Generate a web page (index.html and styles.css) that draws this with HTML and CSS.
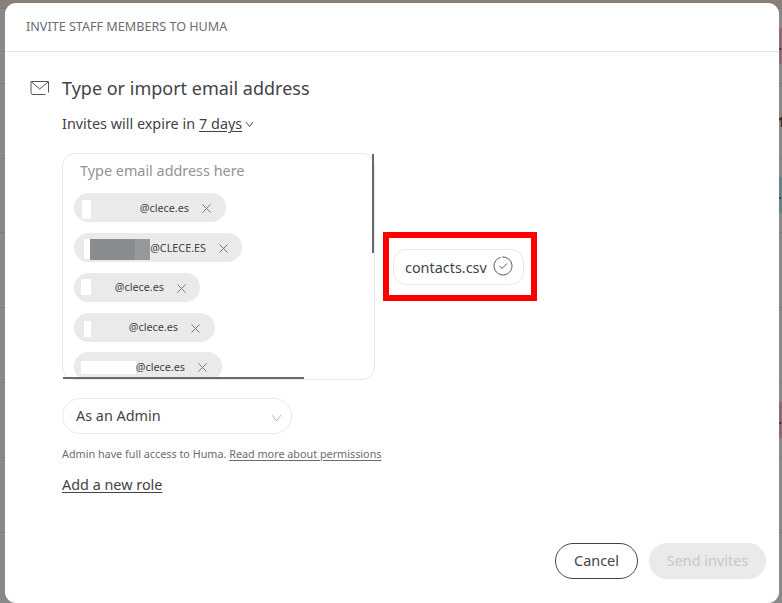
FILE: index.html
```html
<!DOCTYPE html>
<html lang="en">
<head>
<meta charset="utf-8">
<title>Invite staff members</title>
<link rel="stylesheet" href="styles.css">
</head>
<body>
<div class="backdrop" aria-hidden="true">
  <div class="topbar"></div>
  <div class="row"><span class="tag pink">.</span></div>
  <div class="row"><b class="count">1</b></div>
  <div class="row"><span class="tag teal">.</span></div>
  <div class="row"></div>
  <div class="row"></div>
  <div class="row"><span class="tag pink">.</span></div>
  <div class="row"></div>
  <div class="row"></div>
</div>
<main class="modal">
  <header class="modal-header">INVITE STAFF MEMBERS TO HUMA</header>
  <section class="content">
    <svg class="mail" width="20" height="16" viewBox="0 0 20 16"><path d="M15.5 14.5H3Q1 14.5 1 12.5V1.5H18.5V12.5M1.5 2L9.7 9L18 2"/></svg>
    <div class="form">
      <h1>Type or import email address</h1>
      <p class="expiry"><span>Invites will expire in</span><u>7 days</u><svg width="9" height="7" viewBox="0 0 9 7"><path d="M1 1L4.5 5.5L8 1"/></svg></p>
      <div class="import">
        <div class="emails">
          <div class="list">
            <div class="placeholder">Type email address here</div>
            <div class="chip c1"><i></i><span>@clece.es</span><svg viewBox="0 0 9 9"><path d="M.5.5L8.5 8.5M8.5.5L.5 8.5"/></svg></div>
            <div class="chip c2"><i></i><b></b><span>@CLECE.ES</span><svg viewBox="0 0 9 9"><path d="M.5.5L8.5 8.5M8.5.5L.5 8.5"/></svg></div>
            <div class="chip c3"><i></i><span>@clece.es</span><svg viewBox="0 0 9 9"><path d="M.5.5L8.5 8.5M8.5.5L.5 8.5"/></svg></div>
            <div class="chip c4"><i></i><span>@clece.es</span><svg viewBox="0 0 9 9"><path d="M.5.5L8.5 8.5M8.5.5L.5 8.5"/></svg></div>
            <div class="chip c5"><i></i><span>@clece.es</span><svg viewBox="0 0 9 9"><path d="M.5.5L8.5 8.5M8.5.5L.5 8.5"/></svg></div>
          </div>
          <div class="thumb-y"></div>
          <div class="thumb-x"></div>
        </div>
        <div class="highlight">
          <div class="file"><span>contacts.csv</span><svg width="20" height="20" viewBox="0 0 20 20"><path d="M7.5 1.35A9 9 0 0 0 8.4 18.85A9 9 0 0 0 18.85 8.4A9 9 0 0 0 9.2 1M6.5 10L9 12.5L14 7.5"/></svg></div>
        </div>
      </div>
      <div class="select"><span>As an Admin</span><svg width="11" height="8" viewBox="0 0 11 8"><path d="M1 1L5.5 7L10 1"/></svg></div>
      <p class="note"><span>Admin have full access to Huma.</span> <u>Read more about permissions</u></p>
      <p class="add"><u>Add a new role</u></p>
    </div>
  </section>
  <footer class="actions">
    <button class="cancel">Cancel</button>
    <button class="send" disabled>Send invites</button>
  </footer>
</main>
</body>
</html>
```
FILE: styles.css
```css
* { box-sizing: border-box; }
body {
  margin: 0;
  width: 782px;
  height: 603px;
  overflow: hidden;
  display: grid;
  background: #898989;
  color: #434247;
  font: 14.4px/20px "Noto Sans", sans-serif;
}
h1, p { margin: 0; }
svg { fill: none; stroke: #55545a; flex: none; }
u { text-decoration-thickness: 1px; text-underline-offset: 2px; }
.backdrop, .modal { grid-area: 1 / 1; }
.backdrop { overflow: hidden; height: 603px; }
.topbar { height: 8px; background: #898078; }
.row {
  height: 74.8px;
  border-top: 1px solid #7c7c7c;
  display: flex;
  align-items: center;
  justify-content: flex-end;
}
.tag { width: 5px; height: 36px; line-height: 34px; text-align: right; color: #33272b; }
.pink { background: #8c6c74; }
.teal { background: #6c8184; }
.count { width: 5px; color: #29292b; font-size: 15px; }
.modal {
  margin: 3px 3px 0 5px;
  height: 600px;
  background: #fff;
  border-radius: 11px;
  display: flex;
  flex-direction: column;
}
.modal-header {
  height: 49px;
  padding: 0 21px;
  border-bottom: 1px solid #e5e5e7;
  font-size: 12.6px;
  line-height: 48px;
  color: #6c6b73;
}
.content { display: flex; padding: 23px 0 0 25px; flex: 1; }
.mail { margin-top: 5px; }
.form { margin-left: 12px; }
h1 { font-size: 18px; line-height: 26px; font-weight: 400; }
.expiry { display: flex; align-items: center; margin-top: 13px; }
.expiry u { margin: 0 3px 0 4px; }
.import { display: flex; align-items: flex-start; margin-top: 19px; }
.emails {
  position: relative;
  width: 313px;
  height: 227px;
  border: 1px solid #e8e8ea;
  border-radius: 13px;
}
.list {
  height: 225px;
  padding: 7px 11px;
  overflow: hidden;
  display: flex;
  flex-direction: column;
  align-items: flex-start;
}
.placeholder { margin: 0 0 12px 6px; color: #93929a; }
.chip {
  height: 29px;
  flex: none;
  margin-bottom: 11px;
  padding: 0 15px 0 7px;
  border-radius: 15px;
  background: #eaeaea;
  display: flex;
  align-items: center;
  font-size: 10.8px;
}
.chip i { height: 16px; background: #fff; }
.chip span { margin-left: auto; }
.chip svg { width: 9px; height: 9px; margin: 2px 0 0 13px; stroke: #77767b; }
.c1 { width: 152px; }
.c1 i { width: 9px; height: 19px; margin: 4px 0 0 1px; }
.c2 { width: 168px; padding-right: 14px; }
.c2 i { width: 7px; height: 20px; margin: 3px 0 0 3px; }
.c2 b { width: 60px; flex: none; height: 21px; margin-top: 3px; background: linear-gradient(90deg, #8b8c8e 75%, #97989a 75%); }
.c3 { width: 126px; padding-right: 14px; }
.c3 i { width: 10px; margin-bottom: 1px; }
.c3 span, .c4 span { position: relative; top: -1px; }
.c4 { width: 141px; margin-bottom: 10px; }
.c4 i { width: 7px; margin: 3px 0 0 3px; }
.c5 { width: 148px; }
.c5 i { width: 56px; height: 13px; margin-top: 2px; }
.thumb-y { position: absolute; top: 0; right: 0; width: 2px; height: 99px; background: #69686d; }
.thumb-x { position: absolute; left: 0; bottom: 0; width: 241px; height: 2px; background: #69686d; }
.highlight { margin: 79px 0 0 8px; border: 6px solid #f00; width: 154px; height: 69px; padding: 11px 0 0 4px; }
.file {
  width: 131px;
  height: 36px;
  padding: 0 10px 0 11px;
  border: 1px solid #e8e8ea;
  border-radius: 13px;
  display: flex;
  align-items: center;
  justify-content: space-between;
}
.file span { padding-top: 2px; }
.file svg { margin-bottom: 2px; }
.select {
  width: 230px;
  height: 36px;
  margin-top: 18px;
  padding: 0 9px 0 13px;
  border: 1px solid #e8e8ea;
  border-radius: 18px;
  display: flex;
  align-items: center;
  justify-content: space-between;
}
.select svg { stroke: #b8b8bb; margin-top: 3px; }
.note { margin-top: 10px; font-size: 10.8px; color: #6c6b73; }
.add { margin-top: 11px; }
.actions { display: flex; justify-content: flex-end; gap: 11px; padding: 0 13px 24px 0; }
button { height: 36px; padding: 0; border-radius: 18px; font: inherit; }
.cancel { width: 83px; border: 1px solid #434247; background: #fff; color: #434247; }
.send { width: 117px; border: 0; background: #eaeaea; color: #c8c8ca; }
```
